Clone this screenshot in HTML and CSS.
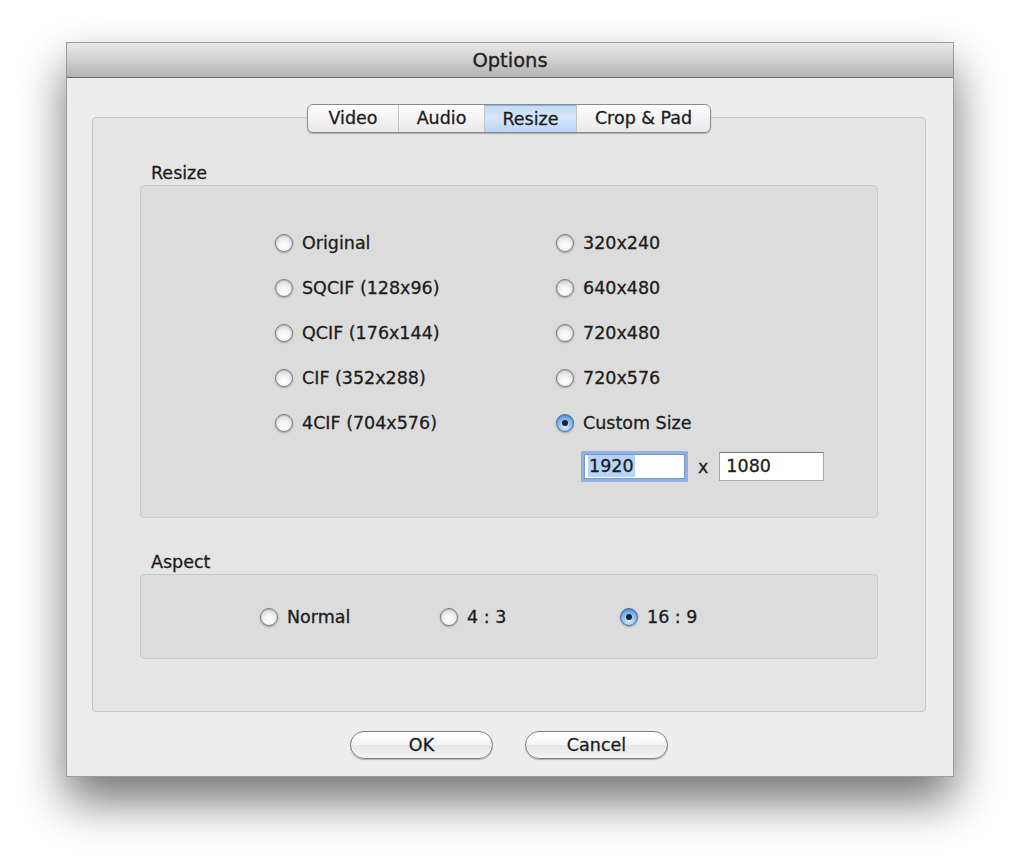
FILE: index.html
```html
<!DOCTYPE html>
<html lang="en">
<head>
  <meta charset="UTF-8">
  <title>Options</title>
  <link rel="stylesheet" href="styles.css">
</head>
<body>
  <div class="window">
    <div class="titlebar">Options</div>

    <div class="content">
      <div class="tabview">
        <div class="tabs">
          <div class="tab">Video</div>
          <div class="tab">Audio</div>
          <div class="tab selected">Resize</div>
          <div class="tab">Crop &amp; Pad</div>
        </div>

        <div class="group-label">Resize</div>
        <div class="group resize-group">
          <div class="radio-grid">
            <label class="option"><span class="radio"></span>Original</label>
            <label class="option"><span class="radio"></span>320x240</label>
            <label class="option"><span class="radio"></span>SQCIF (128x96)</label>
            <label class="option"><span class="radio"></span>640x480</label>
            <label class="option"><span class="radio"></span>QCIF (176x144)</label>
            <label class="option"><span class="radio"></span>720x480</label>
            <label class="option"><span class="radio"></span>CIF (352x288)</label>
            <label class="option"><span class="radio"></span>720x576</label>
            <label class="option"><span class="radio"></span>4CIF (704x576)</label>
            <label class="option"><span class="radio checked"></span>Custom Size</label>
            <div></div>
            <div class="custom-size">
              <div class="field focused"><span class="sel">1920</span></div>
              <span class="times">x</span>
              <div class="field">1080</div>
            </div>
          </div>
        </div>

        <div class="group-label aspect-label">Aspect</div>
        <div class="group aspect-group">
          <label class="option"><span class="radio"></span>Normal</label>
          <label class="option"><span class="radio"></span>4 : 3</label>
          <label class="option"><span class="radio checked"></span>16 : 9</label>
        </div>
      </div>

      <div class="buttons">
        <div class="button">OK</div>
        <div class="button">Cancel</div>
      </div>
    </div>
  </div>
</body>
</html>
```

FILE: styles.css
```css
html,
body {
  min-height: 100vh;
}

body {
  margin: 0;
  padding: 42px 0 0 66px;
  box-sizing: border-box;
  background-color: #ffffff;
  font-family: "DejaVu Sans", "Liberation Sans", sans-serif;
  font-size: 17.5px;
  color: #1c1c1c;
  -webkit-text-stroke: 0.3px #1c1c1c;
}

.window {
  width: 888px;
  height: 735px;
  border: 1px solid #9c9c9c;
  box-sizing: border-box;
  background-color: #ededed;
  box-shadow: 0 24px 44px rgba(0, 0, 0, 0.55);
}

.titlebar {
  height: 34px;
  line-height: 36px;
  text-align: center;
  font-size: 19.5px;
  color: #222;
  background: linear-gradient(#e9e9e9, #cfcfcf 50%, #b2b2b2);
  border-bottom: 1px solid #666;
}

.content {
  padding-top: 39px;
}

.tabview {
  margin-left: 25px;
  width: 834px;
  height: 595px;
  box-sizing: border-box;
  padding: 0 47px;
  border: 1px solid #c6c6c6;
  border-radius: 4px;
  background-color: #e5e5e5;
}

.tabs {
  display: flex;
  justify-content: center;
  margin: -14px auto 0;
  width: fit-content;
  height: 29px;
  box-sizing: border-box;
  border: 1px solid #8a8a8a;
  border-radius: 6px;
  background: linear-gradient(#ffffff, #f3f3f3 50%, #e8e8e8);
  box-shadow: 0 1px 1px rgba(0, 0, 0, 0.25);
  overflow: hidden;
}

.tab {
  box-sizing: border-box;
  text-align: center;
  line-height: 27px;
  border-left: 1px solid #c4c4c4;
}

.tab:first-child {
  border-left: none;
}

.tab:nth-child(1) { width: 90px; }
.tab:nth-child(2) { width: 86px; }
.tab:nth-child(3) { width: 92px; }
.tab:nth-child(4) { width: 134px; }

.tab.selected {
  background: linear-gradient(#c5daf5, #d6e7fa 45%, #b9d6f8);
  border-top: 1px solid #8fb0e0;
  line-height: 26px;
}

.group-label {
  margin: 30px 0 0 11px;
  line-height: 20px;
}

.aspect-label {
  margin-top: 34px;
}

.group {
  margin-top: 2px;
  border: 1px solid #c9c9c9;
  border-radius: 4px;
  background-color: #dcdcdc;
  box-sizing: border-box;
}

.resize-group {
  height: 333px;
  padding: 34px 0 0 134px;
}

.radio-grid {
  display: grid;
  grid-template-columns: 281px 281px;
  grid-auto-rows: 45px;
}

.option {
  display: flex;
  align-items: center;
  gap: 9px;
  height: 45px;
}

.radio {
  width: 18px;
  height: 18px;
  box-sizing: border-box;
  border-radius: 50%;
  border: 1px solid #7e7e7e;
  background: radial-gradient(circle at 50% 70%, #ffffff 0%, #f2f2f2 40%, #c8c8c8 100%);
  box-shadow: 0 1px 2px rgba(0, 0, 0, 0.3), inset 0 1px 1px rgba(0, 0, 0, 0.15);
  display: flex;
  align-items: center;
  justify-content: center;
  flex-shrink: 0;
}

.radio.checked {
  border-color: #4f6f9e;
  background: radial-gradient(circle at 50% 75%, #d6ecff 0%, #8dc0f1 45%, #3f82d3 100%);
}

.radio.checked::after {
  content: "";
  width: 6px;
  height: 6px;
  border-radius: 50%;
  background-color: #1b2433;
}

.custom-size {
  display: flex;
  align-items: center;
  margin-left: 25px;
  height: 31px;
  margin-top: 6px;
}

.field {
  width: 105px;
  height: 29px;
  box-sizing: border-box;
  border: 1px solid #a8a8a8;
  border-top-color: #7a7a7a;
  background-color: #ffffff;
  padding-left: 6px;
  line-height: 27px;
}

.field.focused {
  width: 101px;
  height: 25px;
  line-height: 23px;
  padding-left: 3px;
  border-color: #7b97c8;
  box-shadow: 0 0 0 3px #8fb1e4;
  margin: 0 3px;
}

.sel {
  background-color: #b6d3fb;
  padding: 1px 1px;
}

.times {
  margin: 0 11px 0 10px;
}

.aspect-group {
  height: 85px;
  display: flex;
  align-items: center;
  padding-left: 119px;
}

.aspect-group .option {
  width: 180px;
}

.buttons {
  display: flex;
  justify-content: center;
  gap: 32px;
  margin: 19px 0 0 -2px;
}

.button {
  width: 143px;
  height: 28px;
  box-sizing: border-box;
  border: 1px solid #808080;
  border-radius: 14px;
  background: linear-gradient(#ffffff, #f4f4f4 50%, #e6e6e6 51%, #f4f4f4);
  box-shadow: 0 1px 1px rgba(0, 0, 0, 0.25);
  text-align: center;
  line-height: 26px;
}
```
